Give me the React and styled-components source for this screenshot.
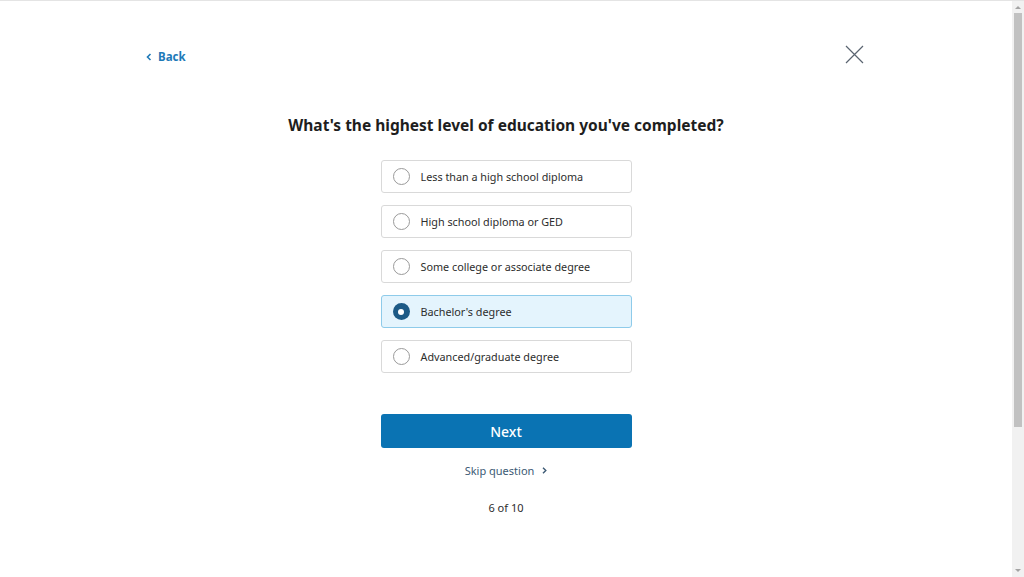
import React, { useState } from "react";
import styled, { createGlobalStyle } from "styled-components";

const GlobalStyle = createGlobalStyle`
  html, body {
    margin: 0;
    padding: 0;
    background: #ffffff;
    font-family: "Noto Sans", "Open Sans", sans-serif;
    color: #2d2d2d;
    overflow: hidden;
  }
`;

const Page = styled.div`
  display: flex;
  height: 100vh;
  border-top: 1px solid #e4e4e4;
  box-sizing: border-box;
`;

const Content = styled.div`
  flex: 1;
  min-width: 0;
`;

const ScrollTrack = styled.div`
  width: 12px;
  flex-shrink: 0;
  background: #f1f1f1;
  display: flex;
  flex-direction: column;
  align-items: center;
  padding: 3px 0;
  box-sizing: border-box;
`;

const ScrollArrow = styled.div`
  width: 0;
  height: 0;
  border-left: 3px solid transparent;
  border-right: 3px solid transparent;
  ${(p) => (p.$down ? "border-top: 3px solid #a3a3a3;" : "border-bottom: 3px solid #a3a3a3;")}
  margin: 2px 0;
`;

const ScrollThumb = styled.div`
  width: 8px;
  height: 414px;
  margin-top: 2px;
  background: #c1c1c1;
`;

const Spacer = styled.div`
  flex: 1;
`;

const TopBar = styled.div`
  display: flex;
  justify-content: space-between;
  align-items: center;
  padding: 35px 148px 0 146px;
  height: 38px;
`;

const BackLink = styled.a`
  display: flex;
  align-items: center;
  gap: 6px;
  font-size: 11.5px;
  font-weight: 700;
  color: #1f7ab8;
  text-decoration: none;
  cursor: pointer;
  margin-top: 3px;
`;

const CloseButton = styled.button`
  border: none;
  background: none;
  padding: 0;
  width: 19px;
  height: 19px;
  margin-top: -2px;
  cursor: pointer;
  display: flex;
  align-items: center;
  justify-content: center;
`;

const Main = styled.main`
  display: flex;
  flex-direction: column;
  align-items: center;
`;

const Title = styled.h1`
  font-size: 15.5px;
  font-weight: 700;
  color: #1e1e1e;
  margin: 39px 0 23px;
  line-height: 24px;
`;

const Options = styled.div`
  display: flex;
  flex-direction: column;
  gap: 12px;
  width: 251px;
`;

const Option = styled.label`
  display: flex;
  align-items: center;
  gap: 11px;
  height: 33px;
  box-sizing: border-box;
  padding: 0 11px;
  border-radius: 3px;
  border: 1px solid ${(p) => (p.$selected ? "#8ecbea" : "#d9d9d9")};
  background: ${(p) => (p.$selected ? "#e4f4fd" : "#ffffff")};
  font-size: 10.8px;
  color: #2d2d2d;
  cursor: pointer;
`;

const Radio = styled.span`
  width: 17px;
  height: 17px;
  border-radius: 50%;
  box-sizing: border-box;
  flex-shrink: 0;
  display: flex;
  align-items: center;
  justify-content: center;
  border: ${(p) => (p.$checked ? "none" : "1px solid #9a9a9a")};
  background: ${(p) => (p.$checked ? "#1d5a86" : "#ffffff")};
  &::after {
    content: "";
    display: ${(p) => (p.$checked ? "block" : "none")};
    width: 6px;
    height: 6px;
    border-radius: 50%;
    background: #ffffff;
  }
`;

const NextButton = styled.button`
  width: 251px;
  height: 34px;
  margin-top: 41px;
  border: none;
  border-radius: 3px;
  background: #0a73b3;
  color: #ffffff;
  font-family: inherit;
  font-size: 14px;
  font-weight: 500;
  cursor: pointer;
`;

const SkipLink = styled.a`
  display: flex;
  align-items: center;
  gap: 8px;
  margin-top: 15px;
  font-size: 11px;
  color: #3c5a74;
  cursor: pointer;
`;

const Progress = styled.div`
  margin-top: 22px;
  font-size: 11px;
  color: #2d2d2d;
`;

const options = [
  "Less than a high school diploma",
  "High school diploma or GED",
  "Some college or associate degree",
  "Bachelor's degree",
  "Advanced/graduate degree",
];

export default function App() {
  const [selected, setSelected] = useState(3);

  return (
    <>
      <GlobalStyle />
      <Page>
        <Content>
          <TopBar>
            <BackLink>
              <svg width="6" height="8" viewBox="0 0 6 8">
                <path d="M4.5 1 L1.5 4 L4.5 7" fill="none" stroke="#1f7ab8" strokeWidth="1.6" />
              </svg>
              Back
            </BackLink>
            <CloseButton aria-label="Close">
              <svg width="19" height="19" viewBox="0 0 19 19">
                <path d="M1 1 L18 18 M18 1 L1 18" stroke="#5a6470" strokeWidth="1.2" fill="none" />
              </svg>
            </CloseButton>
          </TopBar>
          <Main>
            <Title>What's the highest level of education you've completed?</Title>
            <Options>
              {options.map((label, i) => (
                <Option key={label} $selected={selected === i} onClick={() => setSelected(i)}>
                  <Radio $checked={selected === i} />
                  {label}
                </Option>
              ))}
            </Options>
            <NextButton>Next</NextButton>
            <SkipLink>
              Skip question
              <svg width="5" height="7" viewBox="0 0 5 7">
                <path d="M1 0.8 L3.8 3.5 L1 6.2" fill="none" stroke="#3c5a74" strokeWidth="1.4" />
              </svg>
            </SkipLink>
            <Progress>6 of 10</Progress>
          </Main>
        </Content>
        <ScrollTrack>
          <ScrollArrow />
          <ScrollThumb />
          <Spacer />
          <ScrollArrow $down />
        </ScrollTrack>
      </Page>
    </>
  );
}
